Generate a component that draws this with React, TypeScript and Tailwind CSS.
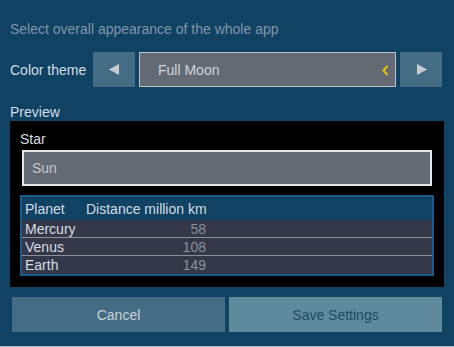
export default function App() {
  const planets = [
    { name: "Mercury", dist: 58 },
    { name: "Venus", dist: 108 },
    { name: "Earth", dist: 149 },
  ]

  return (
    <div className="w-[454px] h-[347px] bg-[#0f4263] font-['Liberation_Sans',Arial,sans-serif] text-[14px] leading-[16px] flex flex-col border-b border-[#b4bcc4]">
      <div className="pt-[21px] pl-[10px] h-[52px] text-[#8396a8]">
        Select overall appearance of the whole app
      </div>

      {/* theme picker */}
      <div className="flex items-center h-[35px] pl-[10px] pr-[12px] gap-[4px]">
        <span className="text-[#d6dde3] w-[79px]">Color theme</span>
        <button className="w-[42px] h-[35px] bg-[#456c85] flex items-center justify-center">
          <svg width="11" height="11" viewBox="0 0 11 11">
            <polygon points="10,0 10,11 0,5.5" fill="#c8ccd0" />
          </svg>
        </button>
        <div className="relative flex-1 h-[35px] bg-[#646a74] border border-[#c0c4c8] flex items-center pl-[18px] text-[#d0d4d8]">
          Full Moon
          <svg className="absolute right-[6px] top-[12px]" width="7" height="11" viewBox="0 0 7 11">
            <polyline points="5.5,1 1.5,5.5 5.5,10" fill="none" stroke="#f0c000" strokeWidth="2" />
          </svg>
        </div>
        <button className="w-[42px] h-[35px] bg-[#456c85] flex items-center justify-center">
          <svg width="11" height="11" viewBox="0 0 11 11">
            <polygon points="1,0 1,11 11,5.5" fill="#c8ccd0" />
          </svg>
        </button>
      </div>

      <div className="pl-[10px] pt-[17px] h-[34px] text-[#d6dde3]">Preview</div>

      {/* preview panel */}
      <div className="mx-[10px] h-[166px] bg-black px-[10px] pt-[10px] flex flex-col">
        <div className="text-[#d6dde3] h-[19px]">Star</div>
        <div className="mx-[2px] h-[36px] bg-[#646a74] border-2 border-[#e4e6e8] flex items-center pl-[8px] text-[#c4c8cc]">
          Sun
        </div>
        <div className="mt-[9px] border-2 border-[#1b5b8c] bg-[#0f4263]">
          <div className="flex h-[23px] items-center text-[#d6dde3] pl-[3px]">
            <span className="w-[61px]">Planet</span>
            <span>Distance million km</span>
          </div>
          {planets.map((p, i) => (
            <div
              key={p.name}
              className={`flex h-[18px] items-center bg-[#343849] pl-[3px] ${i < planets.length - 1 ? "border-b border-[#8c9098]" : ""}`}
            >
              <span className="w-[61px] text-[#d6dde3]">{p.name}</span>
              <span className="w-[120px] text-right text-[#8c9098]">{p.dist}</span>
            </div>
          ))}
        </div>
      </div>

      {/* actions */}
      <div className="flex gap-[4px] px-[12px] pt-[10px]">
        <button className="flex-1 h-[35px] bg-[#456c85] text-[#c8d0d6]">Cancel</button>
        <button className="flex-1 h-[35px] bg-[#5f8a9b] text-[#1e4a66]">Save Settings</button>
      </div>
    </div>
  )
}
